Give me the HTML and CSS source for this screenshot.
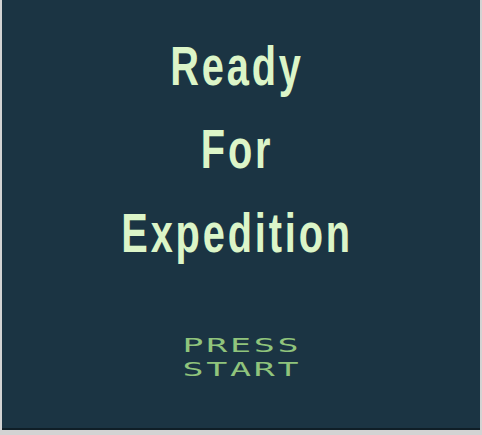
FILE: index.html
```html
<!DOCTYPE html>
<html>
<head>
<meta charset="utf-8">
<link rel="stylesheet" href="styles.css">
</head>
<body>
<div class="screen">
  <div class="title">
    <div class="line line-ready">Ready</div>
    <div class="line line-for">For</div>
    <div class="line line-exp">Expedition</div>
  </div>
  <div class="press">
    <div class="press-line">PRESS</div>
    <div class="press-line">START</div>
  </div>
</div>
</body>
</html>
```

FILE: styles.css
```css
html, body {
  margin: 0;
  padding: 0;
}
body {
  width: 482px;
  height: 435px;
  background: #d3d3d3;
  overflow: hidden;
}
.screen {
  margin-left: 2px;
  width: 478px;
  height: 428px;
  background: #1b3443;
  border-bottom: 2px solid #0f1e27;
  display: flex;
  flex-direction: column;
  align-items: center;
}
.title {
  display: flex;
  flex-direction: column;
  align-items: center;
  padding-right: 11px;
  font-family: "Liberation Sans", Arial, sans-serif;
  font-weight: bold;
  font-size: 56px;
  line-height: 64px;
  color: #dcf5c8;
}
.line {
  letter-spacing: 4px;
  margin-right: -4px;
  transform: scaleX(0.71);
}
.line-ready { margin-top: 34px; }
.line-for { margin-top: 19px; }
.line-exp { margin-top: 20px; }
.press {
  margin-top: 68px;
  display: flex;
  flex-direction: column;
  align-items: center;
  font-family: "DejaVu Sans Mono", monospace;
  font-weight: normal;
  font-size: 20px;
  line-height: 24px;
  color: #90c47c;
}
.press-line {
  letter-spacing: 1.5px;
  margin-right: -1.5px;
  transform: scaleX(1.75);
}
```
